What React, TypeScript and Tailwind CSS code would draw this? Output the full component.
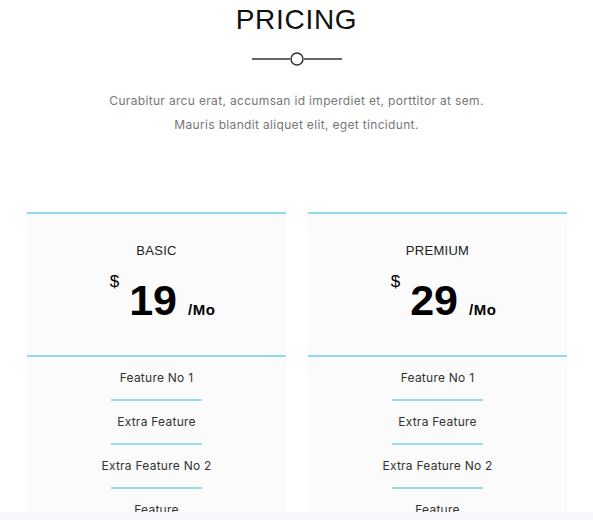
import React from "react";

type Plan = {
  name: string;
  price: string;
  features: string[];
};

const plans: Plan[] = [
  {
    name: "BASIC",
    price: "19",
    features: ["Feature No 1", "Extra Feature", "Extra Feature No 2", "Feature"],
  },
  {
    name: "PREMIUM",
    price: "29",
    features: ["Feature No 1", "Extra Feature", "Extra Feature No 2", "Feature"],
  },
];

const PlanCard = ({ plan }: { plan: Plan }) => {
  return (
    <div className="bg-[#fbfbfb]">
      <div className="border-t-2 border-b-2 border-[#8fdbea] pt-[29px] pb-[33px] text-center">
        <p className="text-[13px] leading-4 tracking-[0.3px] text-[#222] font-['Liberation_Sans',sans-serif]">
          {plan.name}
        </p>
        <div className="mt-[20px] flex items-baseline justify-center pl-3 font-['Liberation_Sans',sans-serif] text-black">
          <span className="self-start -mt-[7px] text-[17px] leading-5">$</span>
          <span className="ml-[10px] text-[43px] leading-[42px] font-bold">
            {plan.price}
          </span>
          <span className="ml-[11px] text-[15px] tracking-[0.5px] font-bold">/Mo</span>
        </div>
      </div>
      <ul className="font-['Inter',sans-serif] text-[12px] leading-4 tracking-[0.25px] text-[#333]">
        {plan.features.map((feature, i) => (
          <li key={i} className="flex flex-col items-center">
            <span className="pt-[13px] pb-[13px]">{feature}</span>
            <div className="h-[2px] w-[91px] bg-[#9adde9]" />
          </li>
        ))}
      </ul>
    </div>
  );
};

export default function App() {
  return (
    <div className="h-[520px] overflow-hidden bg-white flex flex-col">
      <div className="flex-1 overflow-hidden">
        <h1 className="pt-[4px] text-center text-[28px] leading-8 tracking-[0.7px] text-[#111] font-['Liberation_Sans',sans-serif]">
          PRICING
        </h1>
        <div className="mt-[16px] flex justify-center">
          <svg width="92" height="14" viewBox="0 0 92 14">
            <line x1="1" y1="7" x2="39" y2="7" stroke="#333" strokeWidth="1.5" />
            <line x1="53" y1="7" x2="91" y2="7" stroke="#333" strokeWidth="1.5" />
            <circle cx="46" cy="7" r="6" fill="white" stroke="#333" strokeWidth="1.5" />
          </svg>
        </div>
        <p className="mt-[23px] text-center text-[12px] leading-6 tracking-[0.33px] text-[#777] font-['Inter',sans-serif]">
          Curabitur arcu erat, accumsan id imperdiet et, porttitor at sem.
          <br />
          Mauris blandit aliquet elit, eget tincidunt.
        </p>
        <div className="mt-[75px] grid grid-cols-2 gap-[22px] pl-[27px] pr-[26px]">
          {plans.map((plan) => (
            <PlanCard key={plan.name} plan={plan} />
          ))}
        </div>
      </div>
      <div className="h-[8px] shrink-0 bg-[#f6f8fc]" />
    </div>
  );
}
